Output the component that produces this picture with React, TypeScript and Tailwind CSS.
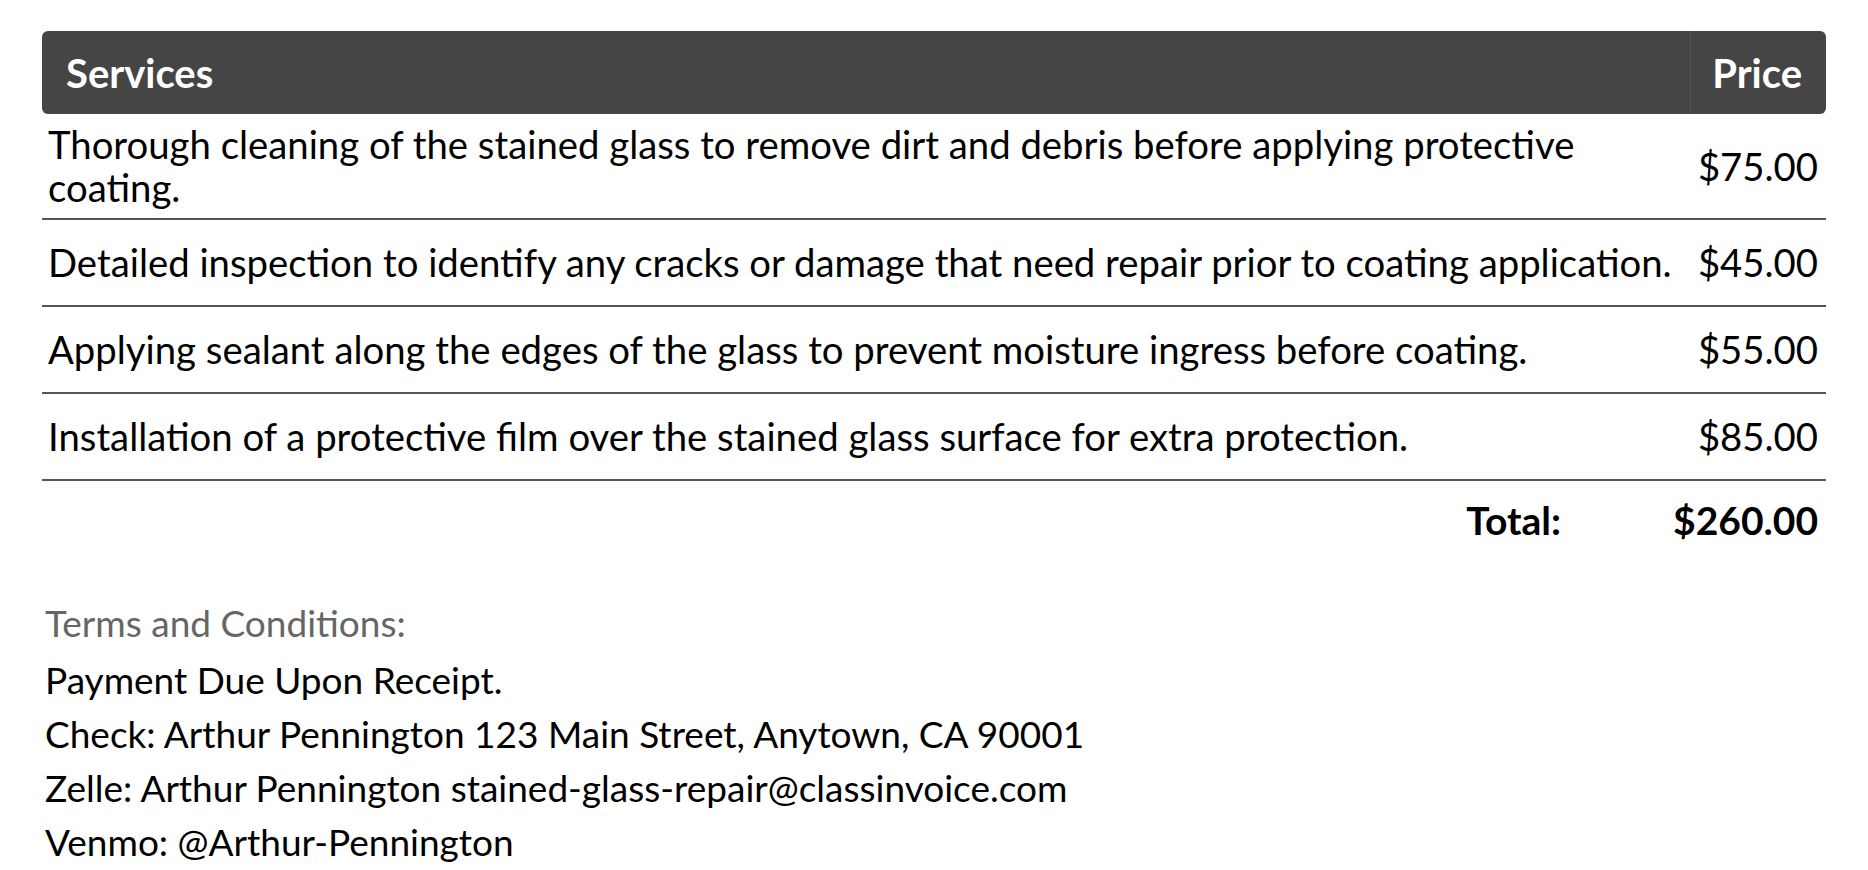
import React from "react";

const rows = [
  {
    text: "Thorough cleaning of the stained glass to remove dirt and debris before applying protective coating.",
    price: "$75.00",
  },
  {
    text: "Detailed inspection to identify any cracks or damage that need repair prior to coating application.",
    price: "$45.00",
  },
  {
    text: "Applying sealant along the edges of the glass to prevent moisture ingress before coating.",
    price: "$55.00",
  },
  {
    text: "Installation of a protective film over the stained glass surface for extra protection.",
    price: "$85.00",
  },
];

const App = () => {
  return (
    <div
      className="min-h-screen bg-white px-[42px] pt-[31px] text-black"
      style={{ fontFamily: "Lato, 'Noto Sans', sans-serif" }}
    >
      {/* table header */}
      <div className="flex h-[83px] rounded-md bg-[#454545] text-white font-bold text-[40px]">
        <div className="flex flex-1 items-center pl-6">Services</div>
        <div className="flex w-[136px] items-center justify-end border-l border-[#555] pr-6">
          Price
        </div>
      </div>

      {rows.map((r) => (
        <div
          key={r.price}
          className="flex min-h-[87px] items-center border-b-2 border-[#555] text-[38.3px] leading-[43px]"
        >
          <div className="flex-1 py-[9px] pl-[6px] pr-2">{r.text}</div>
          <div className="w-[136px] pr-2 text-right">{r.price}</div>
        </div>
      ))}

      <div className="flex h-[78px] items-center justify-end gap-[112px] pr-2 text-[39px] font-bold">
        <span>Total:</span>
        <span>$260.00</span>
      </div>

      <div className="mt-[37px] pl-[3px] text-[37px] leading-[54px]">
        <p className="mb-[3px] text-[#666]">Terms and Conditions:</p>
        <p>Payment Due Upon Receipt.</p>
        <p>Check: Arthur Pennington 123 Main Street, Anytown, CA 90001</p>
        <p>Zelle: Arthur Pennington stained-glass-repair@classinvoice.com</p>
        <p>Venmo: @Arthur-Pennington</p>
      </div>
    </div>
  );
};

export default App;
